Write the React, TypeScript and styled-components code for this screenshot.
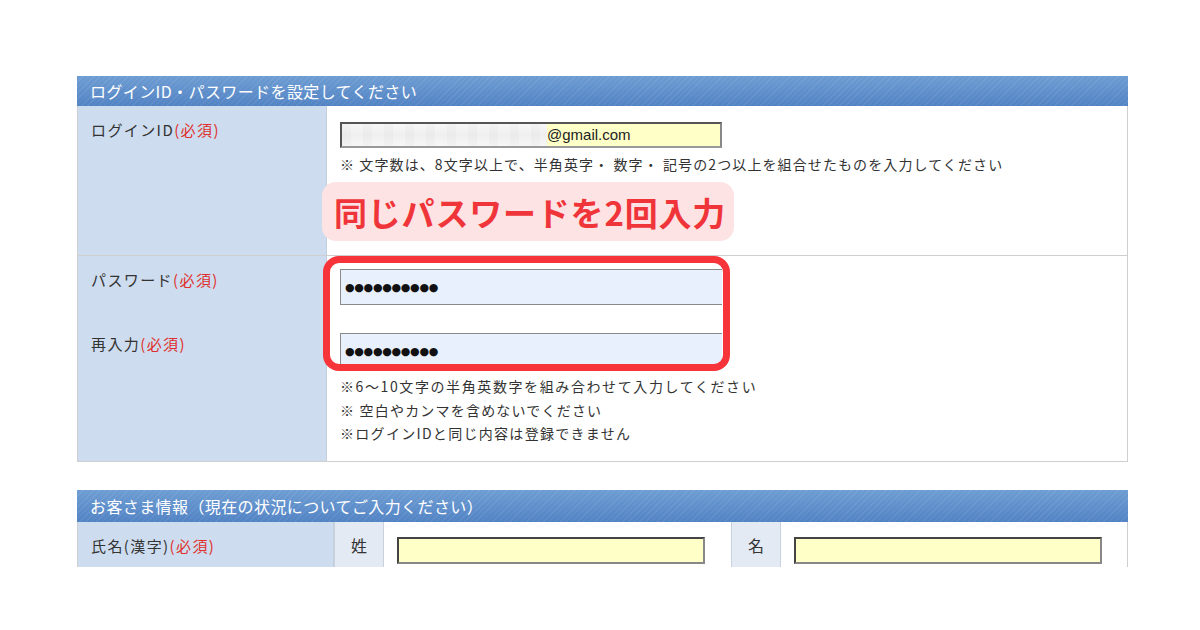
import React from "react";
import styled, { createGlobalStyle } from "styled-components";

const GlobalStyle = createGlobalStyle`
  html, body {
    margin: 0;
    padding: 0;
    background: #ffffff;
  }
  body {
    font-family: "Noto Sans CJK JP", "Noto Sans", sans-serif;
    color: #333;
  }
`;

const Page = styled.div`
  width: 1200px;
  height: 630px;
  overflow: hidden;
  padding: 76px 0 0 77px;
  box-sizing: border-box;
  display: flex;
  flex-direction: column;
  gap: 28px;
`;

const Section = styled.section<{ $clip?: number }>`
  position: relative;
  width: 1051px;
  ${(p) => (p.$clip ? `height: ${p.$clip}px; overflow: hidden;` : "")}
`;

const Header = styled.div<{ $h: number }>`
  height: ${(p) => p.$h}px;
  display: flex;
  align-items: center;
  padding-left: 13px;
  color: #fff;
  font-size: 16px;
  letter-spacing: 0.4px;
  white-space: nowrap;
  background:
    repeating-linear-gradient(135deg, rgba(255, 255, 255, 0.07) 0 1px, transparent 1px 4px),
    linear-gradient(#6e9dd3, #5283c4);
`;

const Table = styled.div`
  border: 1px solid #cfcfcf;
  border-top: none;
`;

const Row = styled.div<{ $h: number }>`
  display: grid;
  grid-template-columns: 249px 1fr;
  height: ${(p) => p.$h}px;
  & + & {
    border-top: 1px solid #cfcfcf;
  }
`;

const LabelCell = styled.div`
  background: #cddcee;
  border-right: 1px solid #c4cfdc;
  padding: 14px 0 0 13px;
  display: flex;
  flex-direction: column;
`;

const Label = styled.div<{ $gap?: number }>`
  font-size: 15px;
  line-height: 20px;
  margin-bottom: ${(p) => p.$gap ?? 0}px;
  letter-spacing: 1.4px;
  white-space: nowrap;
`;

const Required = styled.span`
  color: #e0302d;
`;

const ValueCell = styled.div<{ $top?: number }>`
  background: #fff;
  padding: ${(p) => p.$top ?? 16}px 0 0 13px;
  display: flex;
  flex-direction: column;
`;

const EmailField = styled.div`
  width: 382px;
  height: 26px;
  box-sizing: border-box;
  border: 2px solid #555;
  border-right-color: #888;
  border-bottom-color: #999;
  display: flex;
`;

const Blurred = styled.div`
  width: 205px;
  background:
    repeating-linear-gradient(90deg, rgba(0, 0, 0, 0.02) 0 9px, transparent 9px 21px),
    linear-gradient(#f7f7f7, #efefef 50%, #f7f7f7);
`;

const EmailText = styled.div`
  flex: 1;
  background: #ffffc8;
  font-family: "Liberation Sans", sans-serif;
  font-size: 15px;
  line-height: 22px;
  color: #222;
`;

const Hint = styled.div<{ $top?: number; $ls?: number }>`
  font-size: 14px;
  line-height: 23.5px;
  margin-top: ${(p) => p.$top ?? 0}px;
  color: #333;
  letter-spacing: ${(p) => p.$ls ?? 1}px;
  white-space: nowrap;
`;

const PasswordField = styled.div<{ $gap?: number }>`
  width: 382px;
  height: 36px;
  box-sizing: border-box;
  border: 1px solid #8a8a8a;
  border-right: none;
  background: #e8f0fd;
  margin-bottom: ${(p) => p.$gap ?? 0}px;
  display: flex;
  align-items: center;
  padding-left: 4px;
  font-family: "DejaVu Sans", sans-serif;
  font-size: 11px;
  letter-spacing: -0.3px;
  color: #111;
`;

const Callout = styled.div`
  position: absolute;
  left: 245px;
  top: 106px;
  width: 412px;
  height: 59px;
  border-radius: 14px;
  background: #fde3e3;
  color: #f0353a;
  font-weight: 700;
  font-size: 33px;
  display: flex;
  align-items: center;
  padding-left: 12px;
  box-sizing: border-box;
  letter-spacing: 0.8px;
  white-space: nowrap;
`;

const Highlight = styled.div`
  position: absolute;
  left: 246px;
  top: 180px;
  width: 407px;
  height: 115px;
  box-sizing: border-box;
  border: 7px solid #f6343a;
  border-radius: 16px;
  pointer-events: none;
`;

const NameRow = styled.div`
  display: grid;
  grid-template-columns: 256px 50px 347px 50px 1fr;
  height: 60px;
  border-left: 1px solid #cfcfcf;
  border-right: 1px solid #cfcfcf;
`;

const SubLabel = styled.div`
  background: #e3eaf4;
  border-left: 1px solid #c8d2de;
  border-right: 1px solid #c8d2de;
  display: flex;
  justify-content: center;
  padding-top: 13px;
  font-size: 16px;
  line-height: 20px;
`;

const NameCell = styled.div`
  padding: 15px 0 0 13px;
  background: #fff;
`;

const NameInput = styled.div<{ $w: number }>`
  width: ${(p) => p.$w}px;
  height: 27px;
  box-sizing: border-box;
  border: 2px solid #444;
  border-right-color: #888;
  border-bottom-color: #888;
  background: #ffffc8;
`;

const dots = "●●●●●●●●●●";

export default function App() {
  return (
    <>
      <GlobalStyle />
      <Page>
        <Section>
          <Header $h={30}>ログインID・パスワードを設定してください</Header>
          <Table>
            <Row $h={149}>
              <LabelCell>
                <Label>
                  ログインID<Required>(必須)</Required>
                </Label>
              </LabelCell>
              <ValueCell>
                <EmailField>
                  <Blurred />
                  <EmailText>@gmail.com</EmailText>
                </EmailField>
                <Hint $top={5} $ls={1.1}>
                  ※ 文字数は、8文字以上で、半角英字・ 数字・ 記号の2つ以上を組合せたものを入力してください
                </Hint>
              </ValueCell>
            </Row>
            <Row $h={205}>
              <LabelCell>
                <Label $gap={44}>
                  パスワード<Required>(必須)</Required>
                </Label>
                <Label>
                  再入力<Required>(必須)</Required>
                </Label>
              </LabelCell>
              <ValueCell $top={13}>
                <PasswordField $gap={28}>{dots}</PasswordField>
                <PasswordField>{dots}</PasswordField>
                <Hint $top={6} $ls={1.6}>※6〜10文字の半角英数字を組み合わせて入力してください</Hint>
                <Hint $ls={1.2}>※ 空白やカンマを含めないでください</Hint>
                <Hint $ls={1.3}>※ログインIDと同じ内容は登録できません</Hint>
              </ValueCell>
            </Row>
          </Table>
          <Callout>同じパスワードを2回入力</Callout>
          <Highlight />
        </Section>

        <Section $clip={77}>
          <Header $h={32}>お客さま情報（現在の状況についてご入力ください）</Header>
          <NameRow>
            <LabelCell>
              <Label>
                氏名(漢字)<Required>(必須)</Required>
              </Label>
            </LabelCell>
            <SubLabel>姓</SubLabel>
            <NameCell>
              <NameInput $w={308} />
            </NameCell>
            <SubLabel>名</SubLabel>
            <NameCell>
              <NameInput $w={308} />
            </NameCell>
          </NameRow>
        </Section>
      </Page>
    </>
  );
}
